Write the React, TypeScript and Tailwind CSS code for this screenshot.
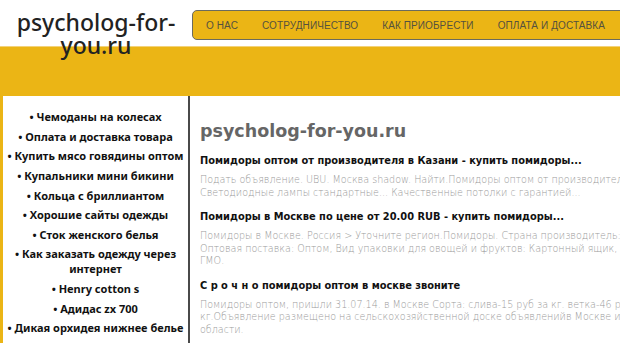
import React from "react";

const navItems = ["О НАС", "СОТРУДНИЧЕСТВО", "КАК ПРИОБРЕСТИ", "ОПЛАТА И ДОСТАВКА"];

const sideItems = [
  "Чемоданы на колесах",
  "Оплата и доставка товара",
  "Купить мясо говядины оптом",
  "Купальники мини бикини",
  "Кольца с бриллиантом",
  "Хорошие сайты одежды",
  "Сток женского белья",
  "Как заказать одежду через интернет",
  "Henry cotton s",
  "Адидас zx 700",
  "Дикая орхидея нижнее белье",
  "Zara 2015 платья",
];

const entries = [
  {
    title: "Помидоры оптом от производителя в Казани - купить помидоры...",
    text: [
      "Подать объявление. UBU. Москва shadow. Найти.Помидоры оптом от производителя в Казани.",
      "Светодиодные лампы стандартные... Качественные потолки с гарантией...",
    ],
  },
  {
    title: "Помидоры в Москве по цене от 20.00 RUB - купить помидоры...",
    text: [
      "Помидоры в Москве. Россия > Уточните регион.Помидоры. Страна производитель: Россия.",
      "Оптовая поставка: Оптом, Вид упаковки для овощей и фруктов: Картонный ящик, Без",
      "ГМО.",
    ],
  },
  {
    title: "С р о ч н о помидоры оптом в москве звоните",
    text: [
      "Помидоры оптом, пришли 31.07.14. в Москве Сорта: слива-15 руб за кг. ветка-46 руб за",
      "кг.Объявление размещено на сельскохозяйственной доске объявленийв Москве и",
      "области.",
    ],
  },
];

export default function App() {
  return (
    <div className="w-[620px] h-[343px] overflow-hidden bg-white relative">
      <div className="w-[900px]">
        {/* header */}
        <div className="flex h-[46px]">
          <div
            className="relative z-10 w-[192px] shrink-0 text-center text-[23px] leading-[23px] text-[#222] pt-[11px]"
            style={{ fontFamily: '"Noto Sans", sans-serif', fontWeight: 500 }}
          >
            psycholog-for-
            <br />
            you.ru
          </div>
          <div className="pt-[10px]">
            <div
              className="flex h-[30px] items-center bg-[#ebb515] border border-[#6b6b5e] rounded-[5px] pl-[1px] pr-[40px]"
              style={{ fontFamily: '"Liberation Sans", sans-serif' }}
            >
              {navItems.map((n) => (
                <span key={n} className="px-[12px] text-[10px] text-[#55513f] tracking-[0.1px]">
                  {n}
                </span>
              ))}
            </div>
          </div>
        </div>
        {/* band */}
        <div className="h-[50px] bg-[#ebb515] border-t border-[#f3d27a]" />
        {/* body */}
        <div className="flex">
          <div className="w-[190px] shrink-0 border-l-[3px] border-[#ebb515] border-r-[2px] border-r-[#4a4a4a] bg-white pt-[11px]">
            <ul
              className="text-center text-[11px] font-bold text-[#111] leading-[15px]"
              style={{ fontFamily: '"Noto Sans", sans-serif' }}
            >
              {sideItems.map((s) => (
                <li key={s} className="py-[2.3px] px-[2px]">
                  • {s}
                </li>
              ))}
            </ul>
          </div>
          <div className="flex-1 pl-[10px] pt-[23px]" style={{ fontFamily: '"DejaVu Sans", sans-serif' }}>
            <div className="text-[17.5px] leading-[24px] font-bold text-[#666]">psycholog-for-you.ru</div>
            {entries.map((e) => (
              <div key={e.title} className="mt-[10px]">
                <div className="text-[9.85px] font-bold text-[#111] leading-[14px] whitespace-nowrap pt-[1px]">{e.title}</div>
                <div className="mt-[6px] text-[9.6px] leading-[12.5px] text-[#9a9a9a] font-extralight whitespace-nowrap">
                  {e.text.map((t) => (
                    <div key={t}>{t}</div>
                  ))}
                </div>
              </div>
            ))}
          </div>
        </div>
      </div>
    </div>
  );
}
